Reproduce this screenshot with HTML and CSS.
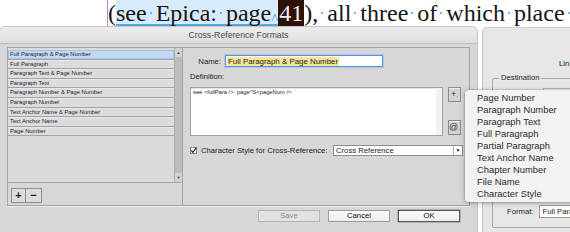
FILE: index.html
```html
<!DOCTYPE html>
<html>
<head>
<meta charset="utf-8">
<link rel="stylesheet" href="styles.css">
</head>
<body>
<div class="page">
  <div class="textline">(<span class="sel">see<i class="d"></i>Epica:<i class="d"></i>page<span class="caret">^</span></span><span class="num">41</span>),<i class="d"></i>all<i class="d"></i>three<i class="d"></i>of<i class="d"></i>which<i class="d"></i>place<i class="d"></i></div>
</div>

<div class="backpanel">
  <div class="bp-lin">Lin</div>
  <div class="bp-group">
    <span class="bp-legend">Destination</span>
    <div class="bp-field"></div>
    <div class="bp-format"><span>Format:</span><div class="bp-fmtfield">Full Para</div></div>
  </div>
</div>

<div class="dialog">
  <div class="titlebar">Cross-Reference Formats</div>
  <div class="body">
    <div class="frame">
      <div class="leftcol">
        <div class="listwrap">
          <div class="list">
            <div class="row selected">Full Paragraph &amp; Page Number</div>
            <div class="row">Full Paragraph</div>
            <div class="row">Paragraph Text &amp; Page Number</div>
            <div class="row">Paragraph Text</div>
            <div class="row">Paragraph Number &amp; Page Number</div>
            <div class="row">Paragraph Number</div>
            <div class="row">Text Anchor Name &amp; Page Number</div>
            <div class="row">Text Anchor Name</div>
            <div class="row">Page Number</div>
          </div>
          <div class="scroll">
            <div class="sarrow">&#9650;</div>
            <div class="strack"></div>
            <div class="sarrow">&#9660;</div>
          </div>
        </div>
        <div class="listbtns">
          <div class="lbtn">+</div>
          <div class="lbtn">&minus;</div>
        </div>
      </div>
      <div class="rightcol">
        <div class="namerow">
          <span class="namelabel">Name:</span>
          <div class="nameinput"><span class="hl">Full Paragraph &amp; Page Number</span></div>
        </div>
        <div class="deflabel">Definition:</div>
        <div class="defrow">
          <div class="textarea">see &lt;fullPara /&gt;: page^S&lt;pageNum /&gt;</div>
          <div class="sidebtns">
            <div class="sq">+<span class="sm">.</span></div>
            <div class="sq">@<span class="sm">.</span></div>
          </div>
        </div>
        <div class="charrow">
          <span class="check"><svg width="7" height="7" viewBox="0 0 7 7"><path d="M1.2 3.6 L2.9 5.4 L6.2 0.8" fill="none" stroke="#111" stroke-width="1.1"/></svg></span>
          <span class="charlabel">Character Style for Cross-Reference:</span>
          <div class="select"><span class="seltext">Cross Reference</span><span class="selarrow">&#9660;</span></div>
        </div>
      </div>
    </div>
    <div class="footer">
      <div class="btn disabled">Save</div>
      <div class="btn">Cancel</div>
      <div class="btn default">OK</div>
    </div>
  </div>
</div>

<div class="menu">
  <div class="mi">Page Number</div>
  <div class="mi">Paragraph Number</div>
  <div class="mi">Paragraph Text</div>
  <div class="mi">Full Paragraph</div>
  <div class="mi">Partial Paragraph</div>
  <div class="mi">Text Anchor Name</div>
  <div class="mi">Chapter Number</div>
  <div class="mi">File Name</div>
  <div class="mi">Character Style</div>
</div>
</body>
</html>
```

FILE: styles.css
```css
* { box-sizing: border-box; margin: 0; padding: 0; }
html, body { width: 570px; height: 232px; overflow: hidden; background: #fff; }
body { position: relative; font-family: "Liberation Sans", Arial, sans-serif; color: #222; }

/* page text behind */
.page { position: absolute; left: 0; top: 0; width: 570px; height: 27px; }
.textline {
  position: absolute; left: 107px; top: 0; height: 27px;
  border-left: 1px solid #b784e6;
  font-family: "Liberation Serif", "Times New Roman", serif;
  font-size: 24px; line-height: 27px; color: #151515; white-space: nowrap;
}
.sel {
  background: linear-gradient(#d8ebfa, #d8ebfa) no-repeat 0 0 / 100% 25px;
  box-shadow: inset 0 -2px 0 #4eaae6;
}
.caret { color: #3f93e0; font-size: 15px; vertical-align: -3px; }
.num { background: #2a1208; color: #f4ece6; padding: 0 1px; }
.d { display: inline-block; width: 9px; height: 0; position: relative; font-style: normal; }
.d::before {
  content: ""; position: absolute; left: 3px; bottom: 7px;
  width: 2px; height: 2px; border-radius: 1px; background: #4e9fe6;
}

/* background panel */
.backpanel {
  position: absolute; left: 482px; top: 27px; width: 100px; height: 205px;
  background: #e6e6e6; border-left: 1px solid #c2c2c2; border-top: 1px solid #cfcfcf;
  border-radius: 5px 0 0 0; font-size: 7.7px; color: #222; overflow: hidden;
}
.bp-lin { position: absolute; left: 76px; top: 31px; }
.bp-group {
  position: absolute; left: 9px; top: 50px; width: 100px; height: 150px;
  border: 1px solid #a9a9a9; border-radius: 2px;
}
.bp-legend { position: absolute; left: 6px; top: -6px; background: #e6e6e6; padding: 0 2px; line-height: 10px; }
.bp-field { position: absolute; left: 50px; top: 9px; width: 50px; height: 12px; border: 1px solid #b5b5b5; background: #fafafa; }
.bp-format { position: absolute; left: 14px; top: 126px; display: flex; align-items: center; gap: 6px; }
.bp-fmtfield { width: 40px; height: 13px; background: #fff; border: 1px solid #9a9a9a; line-height: 11px; padding-left: 2px; white-space: nowrap; }

/* dialog */
.dialog {
  position: absolute; left: 0; top: 27px; width: 477px; height: 205px;
  background: #d7d7d7; border-radius: 5px 5px 0 0; overflow: hidden;
  box-shadow: 0 0 0 1px #c4c4c4;
  font-size: 7.7px; color: #1c1c1c;
}
.titlebar {
  height: 17px; line-height: 16px; text-align: center; font-size: 8.7px; color: #4d4d4d;
  background: linear-gradient(#ececec, #dedede); border-bottom: 1px solid #bdbdbd;
}
.body { padding: 3px 7px 0 7px; }
.frame {
  display: flex; height: 159px; border: 1px solid #a3a3a3;
  box-shadow: 0 1px 0 #ececec;
}
.leftcol { width: 175px; display: flex; flex-direction: column; border-right: 1px solid #a3a3a3; }
.listwrap { height: 135px; display: flex; border-bottom: 1px solid #a3a3a3; }
.list { width: 166px; padding-top: 2px; background: #dadada; }
.row {
  height: 9.6px; line-height: 8.6px; padding-left: 2px; font-size: 5.8px; color: #1d1d2b;
  background: #dcdcdc; border-bottom: 1px solid #a4a4a4; box-shadow: inset 0 1px 0 #e6e6e6;
  white-space: nowrap;
}
.row.selected { background: #c2d9f3; box-shadow: inset 0 0 0 1px #a6c4e6; }
.scroll {
  width: 8px; display: flex; flex-direction: column; background: #c0c0c0;
  border-left: 1px solid #adadad;
}
.sarrow { height: 9px; font-size: 4px; line-height: 9px; text-align: center; color: #333; background: #d2d2d2; }
.strack { flex: 1; background: #bcbcbc; }
.listbtns { display: flex; padding: 5px 0 0 3px; }
.lbtn {
  width: 15px; height: 15px; border: 1px solid #8e8e8e; background: #dcdcdc;
  font-size: 11px; font-weight: bold; line-height: 13px; text-align: center; color: #222;
}
.lbtn + .lbtn { border-left: none; width: 16px; }

.rightcol { flex: 1; padding: 7px 0 0 0; display: flex; flex-direction: column; }
.namerow { display: flex; align-items: center; gap: 4px; }
.namelabel { width: 38px; text-align: right; }
.nameinput {
  width: 158px; height: 12px; background: #fff; border: 1px solid #5f95d6;
  box-shadow: 0 0 0 1px #a9c8ec; padding: 1px 1px; line-height: 8px; font-size: 7.9px; white-space: nowrap;
}
.hl { background: #f8e596; display: inline-block; height: 9px; line-height: 9px; padding: 0 1px; }
.deflabel { margin: 5px 0 0 7px; height: 9px; line-height: 9px; }
.defrow { display: flex; margin: 6px 0 0 7px; gap: 5px; }
.textarea {
  width: 253px; height: 49px; background: #fff; border: 1px solid #a2a2a2;
  box-shadow: inset -6px 0 0 #f2f2f2, inset 0 1px 0 #e2e2e2;
  font-size: 5.8px; line-height: 7px; padding: 1px 2px; white-space: nowrap; color: #222;
}
.sidebtns { display: flex; flex-direction: column; justify-content: space-between; height: 48px; }
.sq {
  width: 13px; height: 15px; border: 1px solid #8b8b8b; background: #d4d4d4;
  font-size: 9px; line-height: 12px; text-align: center; color: #333; box-shadow: inset 0 1px 0 #ececec;
}
.sm { font-size: 6px; }
.charrow { display: flex; align-items: center; margin: 9px 0 0 7px; }
.check {
  width: 7px; height: 7px; background: #fff; border: 1px solid #8a8a8a; display: flex;
  align-items: center; justify-content: center; overflow: visible;
}
.check svg { flex: none; }
.charlabel { margin-left: 4px; width: 132px; white-space: nowrap; }
.select {
  width: 130px; height: 11px; background: #fff; border: 1px solid #8e8e8e; display: flex;
  line-height: 9px;
}
.seltext { flex: 1; padding-left: 2px; }
.selarrow { width: 9px; border-left: 1px solid #b0b0b0; font-size: 5px; text-align: center; color: #222; }

.footer { display: flex; justify-content: flex-end; gap: 8px; padding: 4px 10px 0 0; }
.btn {
  width: 62px; height: 12px; border: 1px solid #9c9c9c; background: linear-gradient(#fbfbfb, #ededed);
  text-align: center; line-height: 10px; font-size: 7.7px; color: #111;
}
.btn.disabled { color: #8a8a8a; background: #e2e2e2; border-color: #b4b4b4; }
.btn.default { border: 1px solid #5a5a5a; box-shadow: 0 0 0 0.5px #888; }

/* popup menu */
.menu {
  position: absolute; left: 465px; top: 90px; width: 112px; height: 112px;
  background: rgba(243, 243, 243, 0.98); border-radius: 4px;
  box-shadow: 0 1px 5px rgba(0, 0, 0, 0.35), 0 0 0 0.5px rgba(0,0,0,0.15);
  padding-top: 2px;
}
.mi { height: 12px; line-height: 12px; padding-left: 12px; font-size: 9.4px; color: #2a2a2a; white-space: nowrap; }
```
